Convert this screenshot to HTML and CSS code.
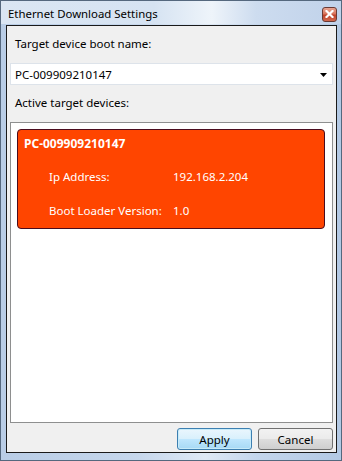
FILE: index.html
```html
<!DOCTYPE html>
<html>
<head>
<meta charset="utf-8">
<link rel="stylesheet" href="styles.css">
</head>
<body>
<div class="window">
  <div class="titlebar">
    <span class="title">Ethernet Download Settings</span>
    <span class="close"><svg width="9" height="8" viewBox="0 0 9 8"><path d="M1.5 1 L7.5 7 M7.5 1 L1.5 7" stroke="#fff" stroke-width="2.2" stroke-linecap="square"/></svg></span>
  </div>
  <div class="client">
    <div class="label first">Target device boot name:</div>
    <div class="combo">
      <span class="combo-text">PC-009909210147</span>
      <svg class="arrow" width="7" height="4" viewBox="0 0 7 4"><path d="M0 0 H7 L3.5 4 Z" fill="#000"/></svg>
    </div>
    <div class="label second">Active target devices:</div>
    <div class="listbox">
      <div class="card">
        <div class="card-title">PC-009909210147</div>
        <div class="row first-row"><span class="key">Ip Address:</span><span class="val">192.168.2.204</span></div>
        <div class="row"><span class="key">Boot Loader Version:</span><span class="val">1.0</span></div>
      </div>
    </div>
    <div class="buttons">
      <button class="btn default">Apply</button>
      <button class="btn">Cancel</button>
    </div>
  </div>
</div>
</body>
</html>
```
FILE: styles.css
```css
html, body { margin: 0; padding: 0; }
body {
  width: 342px; height: 461px; overflow: hidden;
  font-family: "Noto Sans", "Open Sans", sans-serif;
  font-size: 11.5px;
  color: #000;
}
.window {
  box-sizing: border-box;
  width: 342px; height: 461px;
  border: 1px solid #55687e;
  background: linear-gradient(90deg, #b9cde6 0%, #c6d7ec 40%, #dfe9f5 60%, #c4d6ec 75%, #b3c9e4 100%);
  display: flex; flex-direction: column;
  padding: 0 4px 7px 5px;
}
.titlebar {
  height: 23px;
  display: flex; align-items: center; justify-content: space-between;
  background: linear-gradient(90deg, #dbe6f3 0%, #d6e3f2 45%, #eef4fa 62%, #cddcef 75%, #c0d2ea 100%);
  margin: 0 -4px 0 -5px;
  padding: 0 4px 0 7px;
}
.title { font-size: 11.4px; color: #000; padding-top: 1px; }
.close {
  box-sizing: border-box;
  width: 15px; height: 15px;
  margin-top: 3px;
  border: 1px solid #6a3a34;
  border-radius: 3px;
  background: linear-gradient(180deg, #e9a592 0%, #d9765e 45%, #c0432c 55%, #d0694f 100%);
  display: flex; align-items: center; justify-content: center;
}
.client {
  flex: 1;
  box-sizing: border-box;
  border: 1px solid #1a1a1a;
  margin-top: 1px;
  background: #f0f0f0;
  display: flex; flex-direction: column;
  padding: 0 3px 2px 3px;
}
.label { height: 16px; line-height: 16px; padding-left: 5px; }
.label.first { margin-top: 10px; }
.label.second { margin-top: 10px; }
.combo {
  box-sizing: border-box;
  margin-top: 11px;
  height: 22px;
  background: #fff;
  border: 1px solid #dde3ea;
  display: flex; align-items: center; justify-content: space-between;
  padding: 0 5px 0 4px;
}
.arrow { margin-top: 1px; }
.listbox {
  box-sizing: border-box;
  margin-top: 11px;
  height: 301px;
  background: #fff;
  border: 1px solid #8e8f8f;
  padding: 6px 7px 0 6px;
}
.card {
  box-sizing: border-box;
  height: 100px;
  background: #ff4500;
  border: 1px solid #4a0c1e;
  border-radius: 4px;
  color: #fff;
  padding: 5px 6px 0 6px;
}
.card-title { font-weight: bold; font-size: 12px; height: 18px; line-height: 18px; }
.row { display: flex; height: 34px; align-items: center; padding-left: 25px; }
.row.first-row { margin-top: 6px; }
.key { width: 124px; }
.buttons {
  margin-top: auto;
  display: flex; justify-content: flex-end; gap: 6px;
}
.btn {
  box-sizing: border-box;
  width: 75px; height: 22px;
  font-family: inherit; font-size: 11.5px;
  border: 1px solid #707070;
  border-radius: 3px;
  background: linear-gradient(180deg, #f2f2f2 0%, #ebebeb 48%, #dddddd 52%, #cfcfcf 100%);
  color: #000;
  padding: 0;
}
.btn.default {
  border-color: #3c7fb1;
  background: linear-gradient(180deg, #eaf6fd 0%, #d9f0fc 48%, #bee6fd 52%, #a7d9f5 100%);
  box-shadow: inset 0 0 0 1px #c7ebf9;
}
```
